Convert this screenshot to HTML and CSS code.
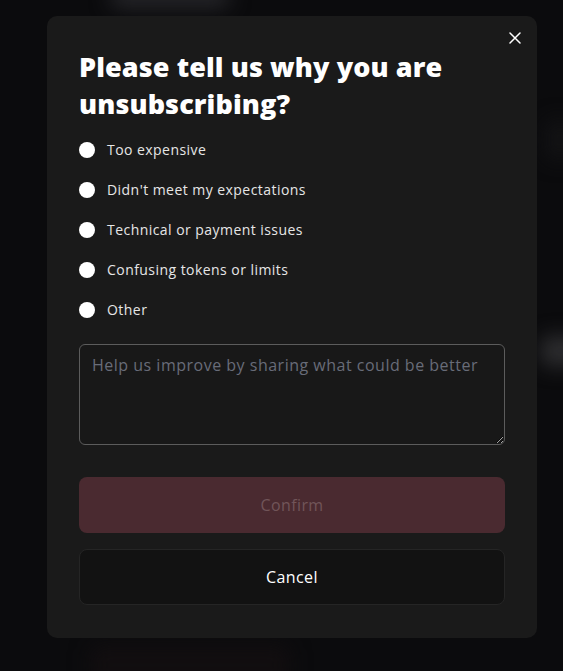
FILE: index.html
```html
<!DOCTYPE html>
<html lang="en">
<head>
<meta charset="utf-8">
<title>Unsubscribe</title>
<link rel="stylesheet" href="styles.css">
</head>
<body>
<div class="backdrop">
  <div class="glow glow-top"></div>
  <div class="glow glow-right"></div>
  <div class="glow glow-right2"></div>
  <div class="glow glow-bottom"></div>
  <div class="modal">
    <button class="close" aria-label="Close">
      <svg width="12" height="12" viewBox="0 0 12 12"><path d="M1 1L11 11M11 1L1 11" stroke="#fff" stroke-width="1.5" stroke-linecap="round"/></svg>
    </button>
    <h2 class="title">Please tell us why you are unsubscribing?</h2>
    <div class="options">
      <label class="option"><span class="radio"></span><span class="label">Too expensive</span></label>
      <label class="option"><span class="radio"></span><span class="label">Didn't meet my expectations</span></label>
      <label class="option"><span class="radio"></span><span class="label">Technical or payment issues</span></label>
      <label class="option"><span class="radio"></span><span class="label">Confusing tokens or limits</span></label>
      <label class="option"><span class="radio"></span><span class="label">Other</span></label>
    </div>
    <textarea class="feedback" placeholder="Help us improve by sharing what could be better"></textarea>
    <button class="btn confirm">Confirm</button>
    <button class="btn cancel">Cancel</button>
  </div>
</div>
</body>
</html>
```
FILE: styles.css
```css
* { box-sizing: border-box; }
html, body { margin: 0; padding: 0; }
body {
  background: #0b0b0d;
  font-family: "Open Sans", "Liberation Sans", sans-serif;
  width: 563px;
  height: 671px;
  overflow: hidden;
}
.backdrop {
  position: relative;
  width: 563px;
  height: 671px;
  padding: 16px 26px 0 47px;
}
.glow {
  position: absolute;
  filter: blur(10px);
  border-radius: 10px;
}
.glow-top { left: 110px; top: -14px; width: 120px; height: 22px; background: #26262a; }
.glow-right { left: 540px; top: 336px; width: 40px; height: 30px; background: #2e2e30; }
.glow-right2 { left: 545px; top: 120px; width: 30px; height: 40px; background: #131315; }
.glow-bottom { left: 90px; top: 645px; width: 200px; height: 40px; background: #120e10; }
.modal {
  position: relative;
  width: 490px;
  height: 622px;
  background: #1a1a1a;
  border-radius: 10px;
  padding: 32px 32px 0 32px;
  display: flex;
  flex-direction: column;
}
.close {
  position: absolute;
  top: 16px;
  right: 16px;
  width: 12px;
  height: 12px;
  padding: 0;
  border: 0;
  background: none;
  display: flex;
}
.title {
  margin: 0 0 16px 0;
  color: #fff;
  font-size: 27px;
  font-weight: 800;
  line-height: 37px;
  letter-spacing: 0.1px;
}
.options {
  display: flex;
  flex-direction: column;
  gap: 16px;
}
.option {
  display: flex;
  align-items: center;
  height: 24px;
  gap: 12px;
}
.radio {
  width: 16px;
  height: 16px;
  border-radius: 50%;
  background: #fff;
  flex: none;
}
.label {
  color: #e6e6e6;
  font-size: 14px;
  font-weight: 400;
  letter-spacing: 0.45px;
  position: relative;
  top: -1px;
}
.feedback {
  margin-top: 22px;
  height: 101px;
  width: 100%;
  background: #181818;
  border: 1px solid #5c5c5c;
  border-radius: 6px;
  padding: 8px 12px;
  font-family: inherit;
  font-size: 16px;
  line-height: 24px;
  letter-spacing: 0.5px;
  color: #fff;
  resize: vertical;
}
.feedback::placeholder { color: #686c78; }
.btn {
  width: 100%;
  height: 56px;
  border-radius: 8px;
  font-family: inherit;
  font-size: 16px;
  letter-spacing: 0.4px;
}
.confirm {
  margin-top: 32px;
  background: #4a2a30;
  border: 0;
  color: #715559;
  font-weight: 500;
}
.cancel {
  margin-top: 16px;
  background: #121212;
  border: 1px solid #252525;
  color: #fff;
  font-weight: 500;
}
```
